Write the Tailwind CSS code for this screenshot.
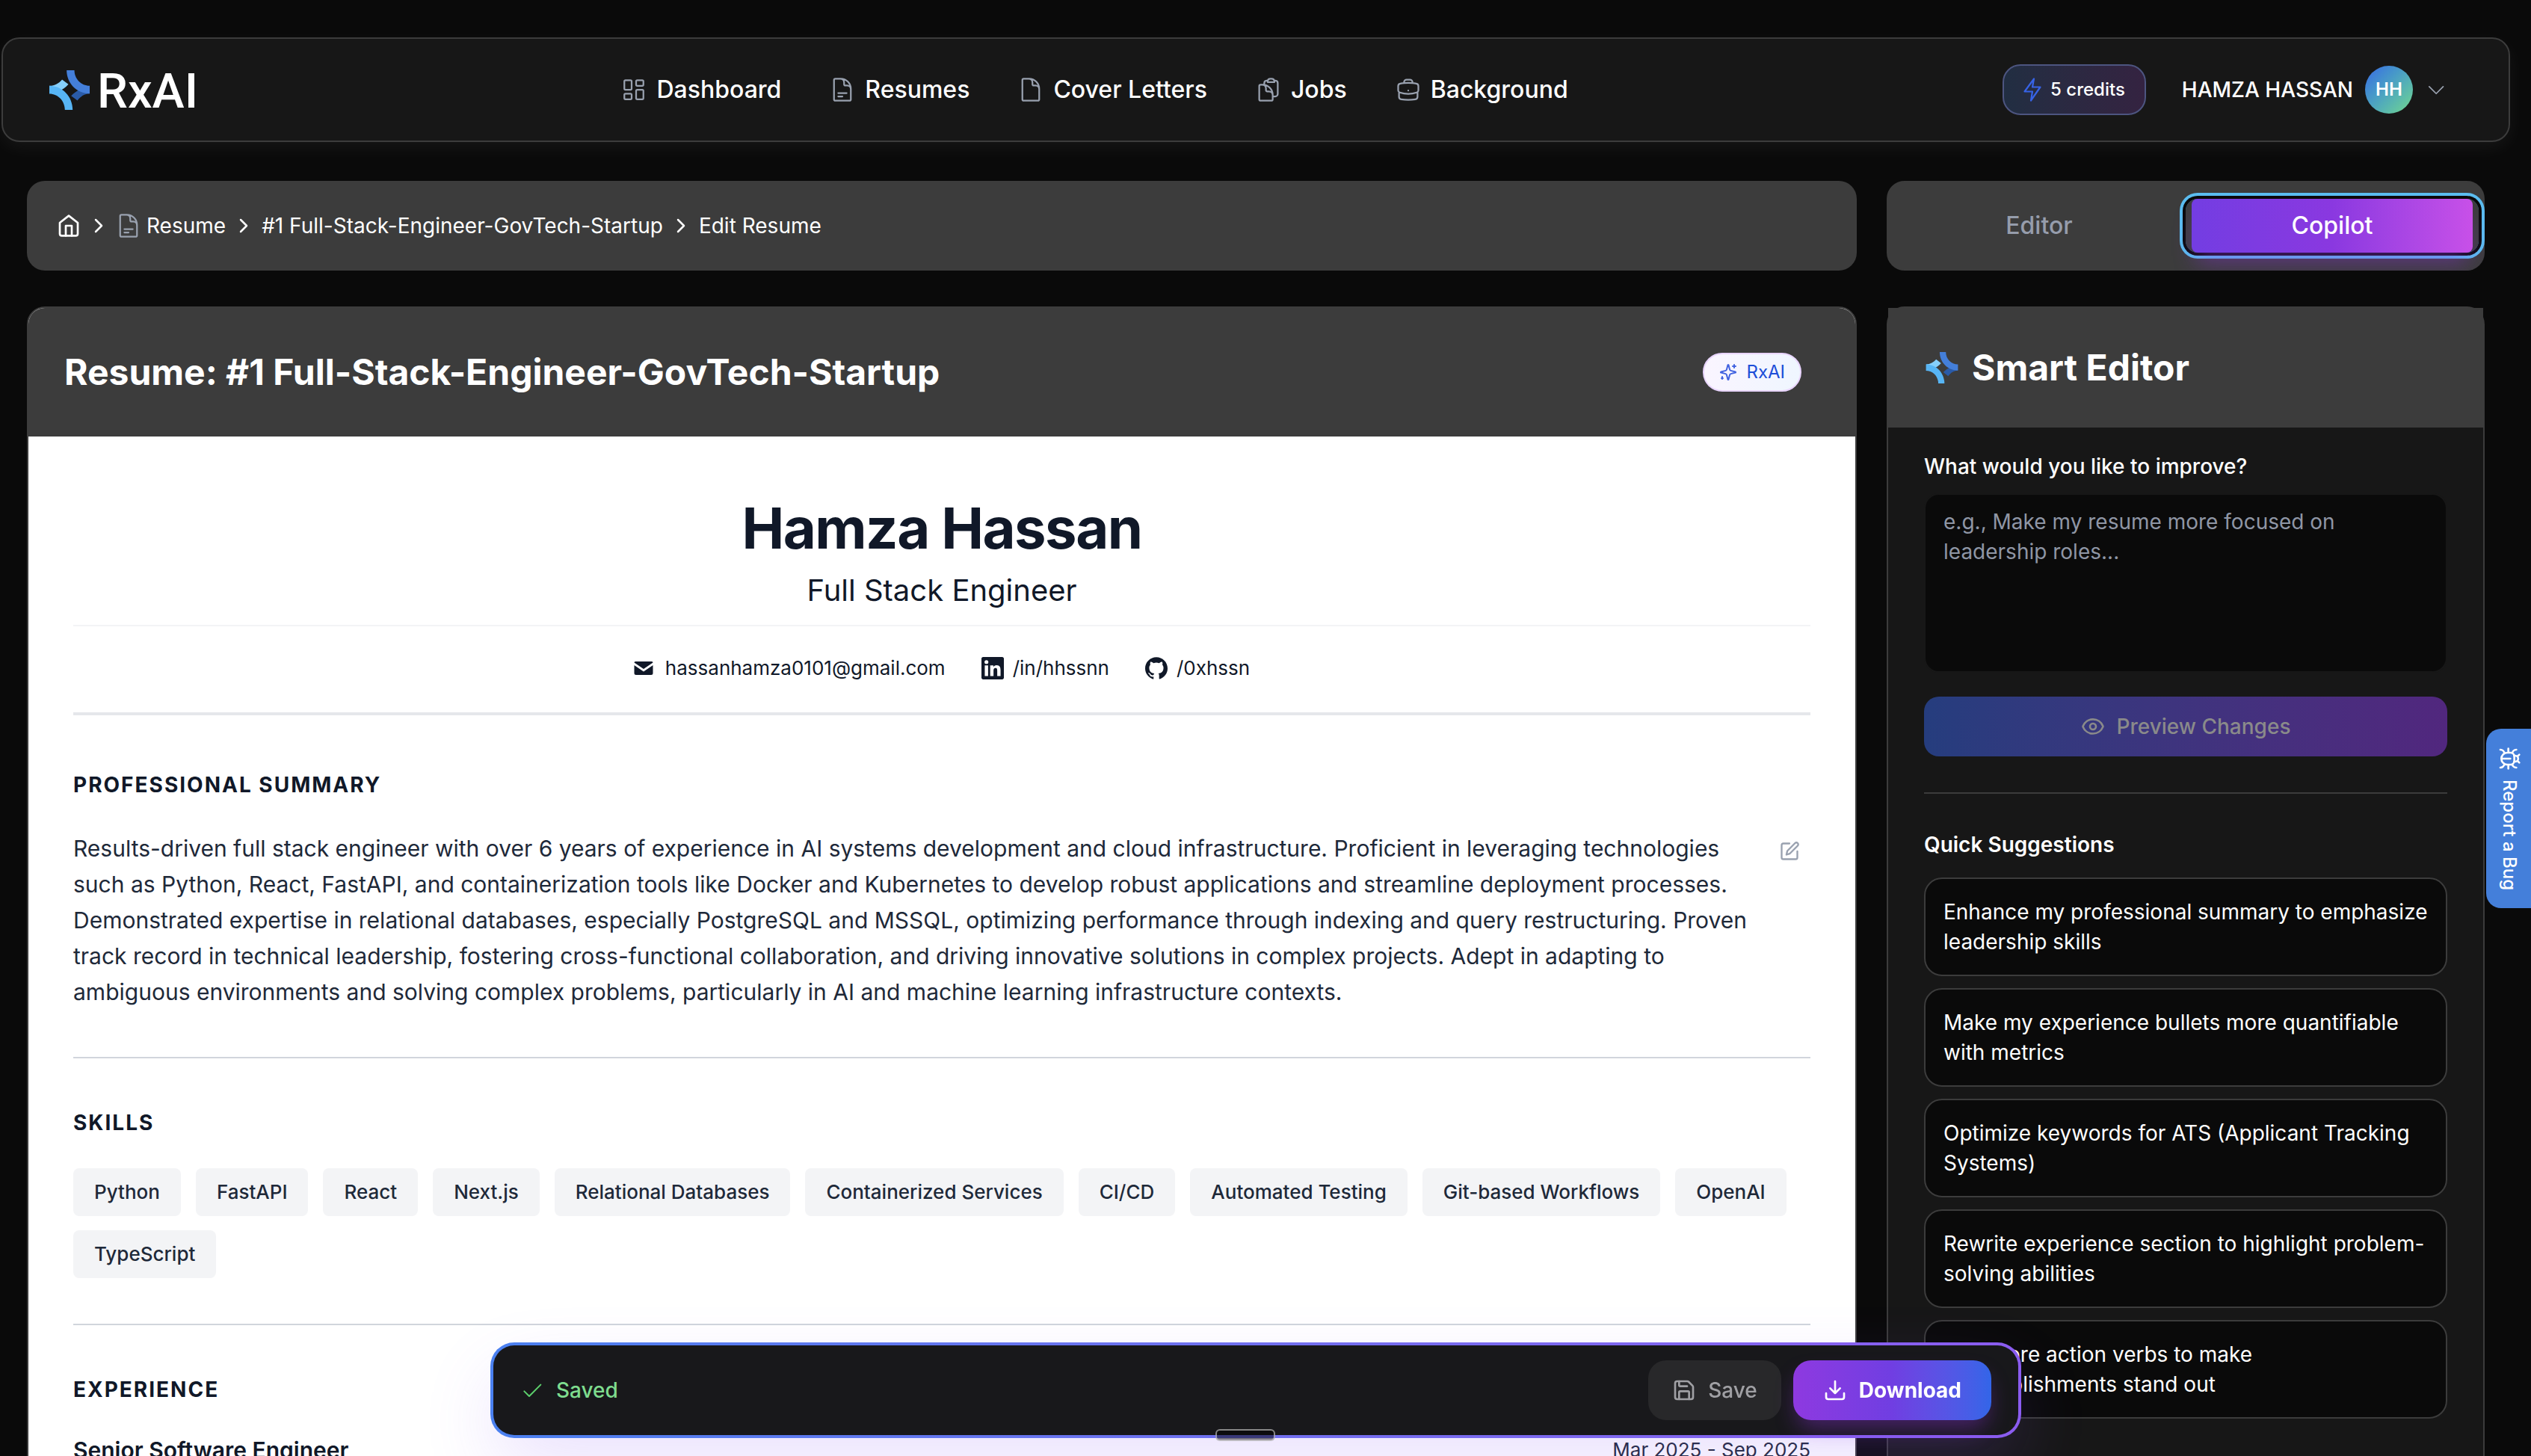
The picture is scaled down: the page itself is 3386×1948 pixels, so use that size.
<!DOCTYPE html>
<html lang="en">
<head>
    <meta charset="UTF-8">
    <meta name="viewport" content="width=device-width, initial-scale=1.0">
    <title>Edit Resume - RxAI</title>
    <script src="https://cdn.jsdelivr.net/npm/@tailwindcss/browser@4"></script>
</head>
<body class="bg-[#0a0a0a] text-white font-['Inter',sans-serif] h-screen overflow-hidden pr-[26px]">

  <!-- Shared icons -->
  <svg class="hidden" aria-hidden="true">
    <symbol id="logo" viewBox="80 101 161 158">
      <path fill="#2a5ba8" d="M167 203 L192 222 C205 205 220 194 241 194 L205 176 C190 182 178 192 167 203Z"/>
      <path fill="#447fda" d="M149 101 H180 C180 135 207 163 241 163 V194 C190 194 149 153 149 101Z"/>
      <path fill="#85cffb" d="M156 157 L131 138 C118 153 102 163 80 163 L118 184 C132 178 145 170 156 157Z"/>
      <path fill="#57b5f5" d="M173 259 H142 C142 224 115 195 80 195 V163 C132 163 173 206 173 259Z"/>
    </symbol>
    <symbol id="doc-text" viewBox="0 0 24 24">
      <path d="M19.5 14.25v-2.625a3.375 3.375 0 0 0-3.375-3.375h-1.5A1.125 1.125 0 0 1 13.5 7.125v-1.5a3.375 3.375 0 0 0-3.375-3.375H8.25m0 12.75h7.5m-7.5 3H12M10.5 2.25H5.625c-.621 0-1.125.504-1.125 1.125v17.25c0 .621.504 1.125 1.125 1.125h12.75c.621 0 1.125-.504 1.125-1.125V11.25a9 9 0 0 0-9-9Z"/>
    </symbol>
    <symbol id="chevron-right" viewBox="0 0 24 24">
      <path d="m8 4 8 8-8 8"/>
    </symbol>
  </svg>

  <!-- Navbar -->
  <header class="mx-[2px] mt-[50px] h-[140px] px-[62px] flex items-center justify-between bg-[#171717] border-2 border-[#3c3c3c] rounded-3xl shadow-[0_8px_24px_rgba(255,255,255,0.05)]">
    <a href="#" class="-mr-4 flex items-center gap-[10px]">
      <svg class="w-[54px] h-[53px]"><use href="#logo"/></svg>
      <span class="pt-1 font-['Roboto',sans-serif] font-medium text-[65px] leading-[72px]">RxAI</span>
    </a>

    <nav class="flex items-center gap-16 text-[32px] leading-[48px] font-medium">
      <a href="#" class="flex items-center gap-3">
        <svg class="size-9 text-gray-400" viewBox="0 0 24 24" fill="none" stroke="currentColor" stroke-width="1.5" stroke-linejoin="round">
          <rect x="3.5" y="3.5" width="6.5" height="8.5" rx="1"/><rect x="14" y="3.5" width="6.5" height="5" rx="1"/>
          <rect x="14" y="12" width="6.5" height="8.5" rx="1"/><rect x="3.5" y="15.5" width="6.5" height="5" rx="1"/>
        </svg>
        Dashboard
      </a>
      <a href="#" class="flex items-center gap-3">
        <svg class="size-9 text-gray-400" fill="none" stroke="currentColor" stroke-width="1.5" stroke-linecap="round" stroke-linejoin="round"><use href="#doc-text"/></svg>
        Resumes
      </a>
      <a href="#" class="flex items-center gap-3">
        <svg class="size-9 text-gray-400" viewBox="0 0 24 24" fill="none" stroke="currentColor" stroke-width="1.5" stroke-linecap="round" stroke-linejoin="round"><path d="M19.5 14.25v-2.625a3.375 3.375 0 0 0-3.375-3.375h-1.5A1.125 1.125 0 0 1 13.5 7.125v-1.5a3.375 3.375 0 0 0-3.375-3.375H8.25m2.25 0H5.625c-.621 0-1.125.504-1.125 1.125v17.25c0 .621.504 1.125 1.125 1.125h12.75c.621 0 1.125-.504 1.125-1.125V11.25a9 9 0 0 0-9-9Z"/></svg>
        Cover Letters
      </a>
      <a href="#" class="flex items-center gap-3">
        <svg class="size-9 text-gray-400" viewBox="0 0 24 24" fill="none" stroke="currentColor" stroke-width="1.5" stroke-linecap="round" stroke-linejoin="round"><path d="M15.75 18H18a2.25 2.25 0 0 0 2.25-2.25V6.108c0-1.135-.845-2.098-1.976-2.192a48.424 48.424 0 0 0-1.123-.08M8.25 7.5V6.108c0-1.135.845-2.098 1.976-2.192.373-.03.748-.057 1.123-.08M15.75 18.75v-1.875a3.375 3.375 0 0 0-3.375-3.375h-1.5a1.125 1.125 0 0 1-1.125-1.125v-1.5A3.375 3.375 0 0 0 6.375 7.5H5.25m11.9-3.664A2.251 2.251 0 0 0 15 2.25h-1.5a2.251 2.251 0 0 0-2.15 1.586m5.8 0c.065.21.1.433.1.664v.75h-6V4.5c0-.231.035-.454.1-.664M6.75 7.5H4.875c-.621 0-1.125.504-1.125 1.125v12c0 .621.504 1.125 1.125 1.125h9.75c.621 0 1.125-.504 1.125-1.125V16.5a9 9 0 0 0-9-9Z"/></svg>
        Jobs
      </a>
      <a href="#" class="flex items-center gap-3">
        <svg class="size-9 text-gray-400" viewBox="0 0 24 24" fill="none" stroke="currentColor" stroke-width="1.5" stroke-linecap="round" stroke-linejoin="round"><path d="M20.25 14.15v4.25c0 1.094-.787 2.036-1.872 2.18-2.087.277-4.216.42-6.378.42s-4.291-.143-6.378-.42c-1.085-.144-1.872-1.086-1.872-2.18v-4.25m16.5 0a2.18 2.18 0 0 0 .75-1.661V8.706c0-1.081-.768-2.015-1.837-2.175a48.114 48.114 0 0 0-3.413-.387m4.5 8.006c-.194.165-.42.295-.673.38A23.978 23.978 0 0 1 12 15.75c-2.648 0-5.195-.429-7.577-1.22a2.016 2.016 0 0 1-.673-.38m0 0A2.18 2.18 0 0 1 3 12.489V8.706c0-1.081.768-2.015 1.837-2.175a48.111 48.111 0 0 1 3.413-.387m7.5 0V5.25A2.25 2.25 0 0 0 13.5 3h-3a2.25 2.25 0 0 0-2.25 2.25v.894m7.5 0a48.667 48.667 0 0 0-7.5 0M12 12.75h.008v.008H12v-.008Z"/></svg>
        Background
      </a>
    </nav>

    <div class="flex items-center gap-12">
      <button class="h-[68px] px-[26px] flex items-center gap-3 rounded-3xl border-2 border-[#4d5580] bg-linear-to-r from-[#212e42] to-[#342341] text-[24px] font-medium">
        <svg class="w-6 h-8" viewBox="0 0 24 32" fill="none" stroke="#3763e6" stroke-width="2.2" stroke-linejoin="round"><path d="M1.5 18.5 14 1.5 12 12.5H22.5L10 30.5 12 18.5Z"/></svg>
        5 credits
      </button>
      <button class="flex items-center gap-4 pr-[22px] text-[28px] font-medium">
        HAMZA HASSAN
        <span class="size-16 rounded-full bg-linear-to-br from-[#3c66e4] to-[#74d888] flex items-center justify-center text-[24px] font-semibold">HH</span>
        <svg class="size-7 text-gray-400" viewBox="0 0 24 24" fill="none" stroke="currentColor" stroke-width="1.5" stroke-linecap="round" stroke-linejoin="round"><path d="m5 8.5 8 8 8-8"/></svg>
      </button>
    </div>
  </header>

  <main class="mt-[52px] px-9 grid grid-cols-[minmax(0,1fr)_800px] gap-x-10 gap-y-12">

    <!-- Breadcrumb -->
    <nav class="h-[120px] px-10 flex items-center gap-2 rounded-3xl bg-[#3c3c3c] text-[28px] leading-10">
      <a href="#" aria-label="Home">
        <svg class="size-8" viewBox="0 0 24 24" fill="none" stroke="currentColor" stroke-width="2" stroke-linecap="round" stroke-linejoin="round"><path d="M3 9l9-7 9 7v11a2 2 0 0 1-2 2H5a2 2 0 0 1-2-2Z"/><path d="M9 22V12h6v10"/></svg>
      </a>
      <svg class="w-8 h-6" fill="none" stroke="currentColor" stroke-width="2.5" stroke-linecap="round" stroke-linejoin="round"><use href="#chevron-right"/></svg>
      <a href="#" class="-ml-[2px] flex items-center gap-[6px]">
        <svg class="size-9 text-gray-400" fill="none" stroke="currentColor" stroke-width="1.5" stroke-linecap="round" stroke-linejoin="round"><use href="#doc-text"/></svg>
        Resume
      </a>
      <svg class="w-8 h-6" fill="none" stroke="currentColor" stroke-width="2.5" stroke-linecap="round" stroke-linejoin="round"><use href="#chevron-right"/></svg>
      <a href="#">#1 Full-Stack-Engineer-GovTech-Startup</a>
      <svg class="w-8 h-6" fill="none" stroke="currentColor" stroke-width="2.5" stroke-linecap="round" stroke-linejoin="round"><use href="#chevron-right"/></svg>
      <span>Edit Resume</span>
    </nav>

    <!-- Tabs -->
    <div class="h-[120px] px-2 grid grid-cols-2 items-center rounded-3xl bg-[#3c3c3c] text-[32px] font-medium overflow-hidden">
      <button class="h-[72px] text-[#969dac]">Editor</button>
      <button class="h-[72px] px-2 rounded-2xl ring-4 ring-[#5bbdf0] ring-offset-4 ring-offset-[#0a0a0a]">
        <span class="h-full flex items-center justify-center rounded-lg bg-linear-to-r from-[#733de2] via-[#8a38e0] to-[#c850e8] shadow-[0_20px_30px_-6px_rgba(147,51,234,0.4)]">Copilot</span>
      </button>
    </div>

    <!-- Resume -->
    <section class="rounded-3xl border-2 border-[#3c3c3c] bg-white overflow-hidden">
      <div class="h-[172px] pl-12 pr-[72px] flex items-center justify-between bg-[#3c3c3c]">
        <h1 class="text-[48px] leading-[64px] font-bold">Resume: #1 Full-Stack-Engineer-GovTech-Startup</h1>
        <span class="h-[52px] px-5 flex items-center gap-3 rounded-full border-2 border-[#e9d5ff] bg-linear-to-r from-[#faf5ff] to-[#eff6ff] text-[#1d4ed8] text-[24px]">
          <svg class="size-6" viewBox="0 0 24 24" fill="none" stroke="#4263e0" stroke-width="2" stroke-linecap="round" stroke-linejoin="round"><path d="M9.9 15.5A2 2 0 0 0 8.5 14.1l-6.1-1.6a.5.5 0 0 1 0-1L8.5 9.9A2 2 0 0 0 9.9 8.5l1.6-6.1a.5.5 0 0 1 1 0l1.6 6.1a2 2 0 0 0 1.4 1.4l6.1 1.6a.5.5 0 0 1 0 1l-6.1 1.6a2 2 0 0 0-1.4 1.4l-1.6 6.1a.5.5 0 0 1-1 0Z"/><path d="M20 2v4M22 4h-4M4 18v3M5 20H3"/></svg>
          RxAI
        </span>
      </div>

      <div class="px-[60px] pt-[74px] text-gray-900">
        <div class="text-center border-b-2 border-gray-100 pb-[18px]">
          <h2 class="text-[76px] leading-[96px] font-bold tracking-[-0.02em]">Hamza Hassan</h2>
          <p class="mt-2 text-[40px] leading-[56px]">Full Stack Engineer</p>
        </div>
        <div class="flex justify-center gap-12 pt-[36px] pb-[39px] border-b-4 border-gray-200 text-[26px] leading-10">
          <a href="#" class="flex items-center gap-4">
            <svg class="w-[26px] h-5" viewBox="0 0 26 20" fill="currentColor"><path d="M2 1h22a1.5 1.5 0 0 1 1.5 1.5L13 11 .5 2.5A1.5 1.5 0 0 1 2 1Z"/><path d="M.5 6 13 14.5 25.5 6v10.500a2.5 2.5 0 0 1-2.5 2.5H3a2.5 2.5 0 0 1-2.5-2.5Z"/></svg>
            hassanhamza0101@gmail.com
          </a>
          <a href="#" class="flex items-center gap-3">
            <svg class="size-[30px]" viewBox="0 0 24 24" fill="currentColor"><path d="M20.447 20.452h-3.554v-5.569c0-1.328-.027-3.037-1.852-3.037-1.853 0-2.136 1.445-2.136 2.939v5.667H9.351V9h3.414v1.561h.046c.477-.9 1.637-1.85 3.37-1.85 3.601 0 4.267 2.37 4.267 5.455v6.286zM5.337 7.433a2.062 2.062 0 0 1-2.063-2.065 2.064 2.064 0 1 1 2.063 2.065zm1.782 13.019H3.555V9h3.564v11.452zM22.225 0H1.771C.792 0 0 .774 0 1.729v20.542C0 23.227.792 24 1.771 24h20.451C23.2 24 24 23.227 24 22.271V1.729C24 .774 23.2 0 22.222 0h.003z"/></svg>
            /in/hhssnn
          </a>
          <a href="#" class="flex items-center gap-3">
            <svg class="size-[30px]" viewBox="0 0 24 24" fill="currentColor"><path d="M12 .297c-6.63 0-12 5.373-12 12 0 5.303 3.438 9.8 8.205 11.385.6.113.82-.258.82-.577 0-.285-.01-1.04-.015-2.04-3.338.724-4.042-1.61-4.042-1.61C4.422 18.07 3.633 17.7 3.633 17.7c-1.087-.744.084-.729.084-.729 1.205.084 1.838 1.236 1.838 1.236 1.07 1.835 2.809 1.305 3.495.998.108-.776.417-1.305.76-1.605-2.665-.3-5.466-1.332-5.466-5.93 0-1.31.465-2.38 1.235-3.22-.135-.303-.54-1.523.105-3.176 0 0 1.005-.322 3.3 1.23.96-.267 1.98-.399 3-.405 1.02.006 2.04.138 3 .405 2.28-1.552 3.285-1.23 3.285-1.23.645 1.653.24 2.873.12 3.176.765.84 1.23 1.91 1.23 3.22 0 4.61-2.805 5.625-5.475 5.92.42.36.81 1.096.81 2.22 0 1.606-.015 2.896-.015 3.286 0 .315.21.69.825.57C20.565 22.092 24 17.592 24 12.297c0-6.627-5.373-12-12-12"/></svg>
            /0xhssn
          </a>
        </div>

        <section class="pt-[72px] pb-[63px] border-b-2 border-gray-300">
          <h3 class="text-[28px] leading-[42px] font-bold tracking-[2px]">PROFESSIONAL SUMMARY</h3>
          <div class="mt-10 flex items-start justify-between">
            <p class="max-w-[2270px] text-[30px] leading-[48px] text-gray-800">Results-driven full stack engineer with over 6 years of experience in AI systems development and cloud infrastructure. Proficient in leveraging technologies such as Python, React, FastAPI, and containerization tools like Docker and Kubernetes to develop robust applications and streamline deployment processes. Demonstrated expertise in relational databases, especially PostgreSQL and MSSQL, optimizing performance through indexing and query restructuring. Proven track record in technical leadership, fostering cross-functional collaboration, and driving innovative solutions in complex projects. Adept in adapting to ambiguous environments and solving complex problems, particularly in AI and machine learning infrastructure contexts.</p>
            <button aria-label="Edit summary" class="mt-[14px] mr-[14px] text-gray-400">
              <svg class="size-7" viewBox="0 0 24 24" fill="none" stroke="currentColor" stroke-width="2" stroke-linecap="round" stroke-linejoin="round"><path d="M12 3H5a2 2 0 0 0-2 2v14a2 2 0 0 0 2 2h14a2 2 0 0 0 2-2v-7"/><path d="M18.4 2.6a2.1 2.1 0 0 1 3 3L12.4 14.6 8.5 15.8 9.5 11.6Z"/></svg>
            </button>
          </div>
        </section>

        <section class="pt-[65px] pb-[61px] border-b-2 border-gray-300">
          <h3 class="text-[28px] leading-[42px] font-bold tracking-[2px]">SKILLS</h3>
          <ul class="mt-10 flex flex-wrap gap-x-5 gap-y-[19px] text-[26px] leading-10 font-medium text-gray-800">
            <li class="px-7 py-3 rounded-lg bg-gray-100">Python</li>
            <li class="px-7 py-3 rounded-lg bg-gray-100">FastAPI</li>
            <li class="px-7 py-3 rounded-lg bg-gray-100">React</li>
            <li class="px-7 py-3 rounded-lg bg-gray-100">Next.js</li>
            <li class="px-7 py-3 rounded-lg bg-gray-100">Relational Databases</li>
            <li class="px-7 py-3 rounded-lg bg-gray-100">Containerized Services</li>
            <li class="px-7 py-3 rounded-lg bg-gray-100">CI/CD</li>
            <li class="px-7 py-3 rounded-lg bg-gray-100">Automated Testing</li>
            <li class="px-7 py-3 rounded-lg bg-gray-100">Git-based Workflows</li>
            <li class="px-7 py-3 rounded-lg bg-gray-100">OpenAI</li>
            <li class="px-7 py-3 rounded-lg bg-gray-100">TypeScript</li>
          </ul>
        </section>

        <section class="pt-[65px] pb-16">
          <h3 class="text-[28px] leading-[42px] font-bold tracking-[2px]">EXPERIENCE</h3>
          <div class="mt-10 flex justify-between leading-10">
            <h4 class="text-[30px] font-semibold">Senior Software Engineer</h4>
            <span class="text-[26px] text-gray-800">Mar 2025 - Sep 2025</span>
          </div>
        </section>
      </div>
    </section>

    <!-- Smart editor -->
    <aside class="rounded-3xl border-2 border-[#3c3c3c] bg-[#171717] pb-24">
      <div class="h-40 px-12 flex items-center gap-4 bg-[#3c3c3c]">
        <svg class="w-12 h-[42px]"><use href="#logo"/></svg>
        <h2 class="text-[48px] leading-[64px] font-bold">Smart Editor</h2>
      </div>
      <div class="px-12 pt-8 text-[28px] leading-10">
        <label for="prompt" class="block font-medium">What would you like to improve?</label>
        <textarea id="prompt" placeholder="e.g., Make my resume more focused on leadership roles..." class="mt-4 block w-full h-60 px-6 py-4 resize-none rounded-[20px] border-2 border-[#171717] bg-[#0a0a0a] placeholder:text-[#8f96a5]"></textarea>
        <button disabled class="mt-8 w-full h-20 flex items-center justify-center gap-4 rounded-[20px] bg-linear-to-r from-[#253d7e] to-[#51277e] text-[#8a8a8a] font-medium">
          <svg class="size-8" viewBox="0 0 24 24" fill="none" stroke="currentColor" stroke-width="2" stroke-linecap="round" stroke-linejoin="round"><path d="M2 12.3a1 1 0 0 1 0-.7 10.75 10.75 0 0 1 20 0 1 1 0 0 1 0 .7 10.75 10.75 0 0 1-20 0Z"/><circle cx="12" cy="12" r="3"/></svg>
          Preview Changes
        </button>
        <hr class="mt-12 border-t-2 border-[#3c3c3c]">
        <h3 class="mt-12 font-semibold">Quick Suggestions</h3>
        <div class="mt-6 flex flex-col gap-4">
          <button class="py-6 pl-6 pr-5 text-left rounded-3xl border-2 border-[#3c3c3c] bg-[#0a0a0a]">Enhance my professional summary to emphasize leadership skills</button>
          <button class="py-6 pl-6 pr-5 text-left rounded-3xl border-2 border-[#3c3c3c] bg-[#0a0a0a]">Make my experience bullets more quantifiable with metrics</button>
          <button class="py-6 pl-6 pr-5 text-left rounded-3xl border-2 border-[#3c3c3c] bg-[#0a0a0a]">Optimize keywords for ATS (Applicant Tracking Systems)</button>
          <button class="py-6 pl-6 pr-5 text-left rounded-3xl border-2 border-[#3c3c3c] bg-[#0a0a0a]">Rewrite experience section to highlight problem-solving abilities</button>
          <button class="py-6 pl-6 pr-5 text-left rounded-3xl border-2 border-[#3c3c3c] bg-[#0a0a0a]">Add more action verbs to make accomplishments stand out</button>
        </div>
      </div>
    </aside>
  </main>

  <!-- Report a bug -->
  <button class="fixed right-0 top-1/2 -translate-y-1/2 h-60 w-[60px] mt-[121px] pl-[2px] flex items-center justify-center gap-3 rounded-l-[20px] bg-[#447fda] [writing-mode:vertical-rl] text-[24px] font-medium">
    <svg class="size-8 rotate-90" viewBox="0 0 24 24" fill="none" stroke="currentColor" stroke-width="2" stroke-linecap="round" stroke-linejoin="round"><path d="m8 2 1.88 1.88M14.12 3.88 16 2M9 7.13v-1a3 3 0 1 1 6 0v1"/><path d="M12 20c-3.3 0-6-2.7-6-6v-3a4 4 0 0 1 4-4h4a4 4 0 0 1 4 4v3c0 3.3-2.7 6-6 6M12 20v-9M6.53 9C4.6 8.8 3 7.1 3 5M6 13H2M3 21c0-2.1 1.7-3.9 3.8-4M20.97 5c0 2.1-1.6 3.8-3.5 4M22 13h-4M17.2 17c2.1.1 3.8 1.9 3.8 4"/></svg>
    Report a Bug
  </button>

  <!-- Save bar -->
  <div class="fixed left-0 right-[26px] bottom-6 flex justify-center">
    <div class="w-[2048px] p-1 rounded-[32px] bg-linear-to-r from-[#4a80f0] to-[#8b5cf0] shadow-[0_40px_100px_-10px_rgba(139,92,246,0.2)]">
      <div class="h-[120px] px-9 flex items-center justify-between rounded-[28px] bg-[#18181b] text-[28px] font-medium">
        <div class="flex items-center gap-4 text-[#7edc8e]">
          <svg class="size-8" viewBox="0 0 24 24" fill="none" stroke="#5ccf6c" stroke-width="1.5" stroke-linecap="round" stroke-linejoin="round"><path d="m4 13 5 5L20.5 6.5"/></svg>
          Saved
        </div>
        <div class="flex items-center gap-4">
          <button disabled class="h-20 px-8 flex items-center gap-4 rounded-3xl bg-[#28282a] text-[#a0a0a4]">
            <svg class="size-8" viewBox="0 0 24 24" fill="none" stroke="currentColor" stroke-width="2" stroke-linecap="round" stroke-linejoin="round"><path d="M15.2 3a2 2 0 0 1 1.4.6l3.8 3.8a2 2 0 0 1 .6 1.4V19a2 2 0 0 1-2 2H5a2 2 0 0 1-2-2V5a2 2 0 0 1 2-2Z"/><path d="M17 21v-7a1 1 0 0 0-1-1H8a1 1 0 0 0-1 1v7M7 3v4a1 1 0 0 0 1 1h7"/></svg>
            Save
          </button>
          <button class="h-20 px-10 flex items-center gap-4 rounded-3xl bg-linear-to-r from-[#8e39e0] via-[#703ee2] to-[#3265e8] font-bold shadow-[0_16px_30px_-6px_rgba(147,51,234,0.4)]">
            <svg class="size-8" viewBox="0 0 24 24" fill="none" stroke="currentColor" stroke-width="2" stroke-linecap="round" stroke-linejoin="round"><path d="M12 3v12m0 0-5-5m5 5 5-5"/><path d="M3 15v4a2 2 0 0 0 2 2h14a2 2 0 0 0 2-2v-4"/></svg>
            Download
          </button>
        </div>
      </div>
    </div>
  </div>

  <!-- Drag handle -->
  <div class="fixed left-[1626px] bottom-5 w-20 h-4 rounded-md border-2 border-white/50 bg-black/50"></div>
</body>
</html>
